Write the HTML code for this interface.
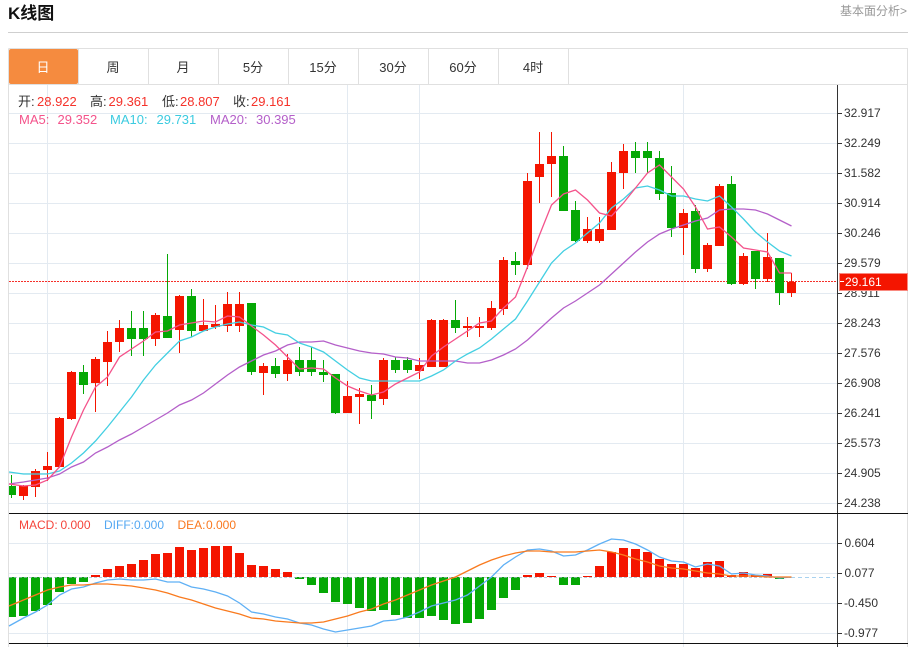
<!DOCTYPE html>
<html lang="zh">
<head>
<meta charset="utf-8">
<title>K线图</title>
<style>
html,body{margin:0;padding:0;background:#fff;width:914px;height:647px;overflow:hidden}
svg{position:absolute;left:0;top:0;display:block}
text{font-family:"Liberation Sans","Noto Sans CJK SC",sans-serif}
.ax text{font-size:12px;fill:#333}
.tab text{font-size:13px;fill:#333;text-anchor:middle}
</style>
</head>
<body>
<svg width="914" height="647" viewBox="0 0 914 647" xmlns="http://www.w3.org/2000/svg">
<text x="8" y="19" font-size="17" font-weight="700" fill="#111">K线图</text>
<text x="840" y="15" font-size="12" fill="#999">基本面分析&gt;</text>
<path d="M8 32.5H908" stroke="#cfcfcf" fill="none"/>

<!-- frame and tabs -->
<path d="M8.5 48.5H907.5V647M8.5 48.5V647M8 84.5H908" stroke="#e0e0e0" fill="none"/>
<path d="M78.5 48V84M148.5 48V84M218.5 48V84M288.5 48V84M358.5 48V84M428.5 48V84M498.5 48V84M568.5 48V84" stroke="#e0e0e0" fill="none"/>
<rect x="9" y="49" width="69" height="35" rx="2" fill="#f58b3f"/>
<g class="tab">
<text x="43" y="72" style="fill:#fff">日</text>
<text x="113" y="72">周</text>
<text x="183" y="72">月</text>
<text x="253" y="72">5分</text>
<text x="323" y="72">15分</text>
<text x="393" y="72">30分</text>
<text x="463" y="72">60分</text>
<text x="533" y="72">4时</text>
</g>

<!-- grid -->
<path d="M9 113.5H837M9 143.5H837M9 173.5H837M9 203.5H837M9 233.5H837M9 263.5H837M9 293.5H837M9 323.5H837M9 353.5H837M9 383.5H837M9 413.5H837M9 443.5H837M9 473.5H837M9 503.5H837M9 543.5H837M9 573.5H837M9 603.5H837M9 633.5H837M47.5 85V647M347.5 85V647M419.5 85V647M683.5 85V647" stroke="#e3eaf1" fill="none"/>

<!-- price line -->
<path d="M9 281.5H837" stroke="#f5302a" stroke-dasharray="2 1" fill="none"/>

<!-- red candles -->
<path stroke="#f41500" fill="none" d="M23.5 485V500M35.5 469V497M47.5 452V481M59.5 417V467M71.5 371V420M95.5 357V412M107.5 331V386M119.5 320V352M155.5 313V346M179.5 295V353M203.5 299V331M215.5 305V329M227.5 292V332M239.5 292V332M263.5 363V395M287.5 354V381M347.5 381V413M359.5 388V424M383.5 358V405M419.5 358V379M431.5 319V367M443.5 319V367M467.5 317V337M479.5 317V337M491.5 301V330M503.5 257V315M527.5 173V269M539.5 132V203M551.5 132V197M587.5 217V243M599.5 217V243M611.5 162V230M623.5 144V189M683.5 209V255M707.5 243V272M719.5 184V246M743.5 253V285M767.5 233V282M791.5 273V297"/>
<path fill="#f41500" d="M19 486h9V496h-9zM31 471h9V487h-9zM43 466h9V470h-9zM55 418h9V467h-9zM67 372h9V419h-9zM91 359h9V383h-9zM103 342h9V362h-9zM115 328h9V342h-9zM151 315h9V339h-9zM175 296h9V330h-9zM199 325h9V331h-9zM211 324h9V327h-9zM223 304h9V326h-9zM235 304h9V326h-9zM259 366h9V373h-9zM283 360h9V374h-9zM343 396h9V413h-9zM355 394h9V397h-9zM379 360h9V399h-9zM415 365h9V371h-9zM427 320h9V367h-9zM439 320h9V367h-9zM463 326h9V328h-9zM475 326h9V328h-9zM487 308h9V328h-9zM499 260h9V309h-9zM523 181h9V265h-9zM535 164h9V177h-9zM547 156h9V164h-9zM583 229h9V241h-9zM595 229h9V241h-9zM607 172h9V230h-9zM619 151h9V173h-9zM679 213h9V228h-9zM703 245h9V269h-9zM715 186h9V246h-9zM739 256h9V284h-9zM763 257h9V279h-9zM787 282h9V293h-9z"/>

<!-- green candles -->
<path stroke="#05a805" fill="none" d="M11.5 475V498M83.5 365V394M131.5 311V356M143.5 311V356M167.5 254V338M191.5 289V337M251.5 303V375M275.5 358V378M299.5 347V376M311.5 347V376M323.5 360V382M335.5 374V414M371.5 385V419M395.5 357V373M407.5 357V373M455.5 300V333M515.5 252V275M563.5 146V211M575.5 201V242M635.5 142V173M647.5 142V173M659.5 151V200M671.5 166V237M695.5 205V273M731.5 176V285M755.5 251V289M779.5 258V305"/>
<path fill="#05a805" d="M9 486h7V495h-7zM79 372h9V385h-9zM127 328h9V339h-9zM139 328h9V339h-9zM163 316h9V338h-9zM187 296h9V331h-9zM247 303h9V372h-9zM271 366h9V374h-9zM295 360h9V372h-9zM307 360h9V372h-9zM319 372h9V375h-9zM331 374h9V413h-9zM367 395h9V401h-9zM391 360h9V370h-9zM403 360h9V370h-9zM451 320h9V328h-9zM511 261h9V265h-9zM559 156h9V211h-9zM571 210h9V241h-9zM631 151h9V158h-9zM643 151h9V158h-9zM655 158h9V194h-9zM667 193h9V228h-9zM691 211h9V269h-9zM727 184h9V284h-9zM751 251h9V279h-9zM775 258h9V293h-9z"/>

<!-- MA lines -->
<polyline fill="none" stroke="#b45fc9" stroke-width="1.3" points="9,484 23.5,482 35.5,480 47.5,478 59.5,474 71.5,467 83.5,462 95.5,453 107.5,447 119.5,440 131.5,434 143.5,427 155.5,420 167.5,413 179.5,405 191.5,400 203.5,393 215.5,384 227.5,375 239.5,367 251.5,361 263.5,355 275.5,351 287.5,345 299.5,342 311.5,342 323.5,341 335.5,345 347.5,348 359.5,351 371.5,353 383.5,354 395.5,357 407.5,358 419.5,361 431.5,361 443.5,361 455.5,361 467.5,363 479.5,363 491.5,360 503.5,355 515.5,349 527.5,340 539.5,329 551.5,318 563.5,308 575.5,301 587.5,293 599.5,285 611.5,274 623.5,263 635.5,252 647.5,242 659.5,234 671.5,229 683.5,225 695.5,221 707.5,218 719.5,210 731.5,209 743.5,209 755.5,210 767.5,214 779.5,220 791.5,226"/>
<polyline fill="none" stroke="#43cfe2" stroke-width="1.3" points="9,472 23.5,474 35.5,474 47.5,474 59.5,471 71.5,463 83.5,453 95.5,441 107.5,427 119.5,412 131.5,397 143.5,380 155.5,365 167.5,353 179.5,341 191.5,337 203.5,331 215.5,327 227.5,324 239.5,322 251.5,325 263.5,327 275.5,333 287.5,335 299.5,343 311.5,347 323.5,352 335.5,361 347.5,370 359.5,378 371.5,381 383.5,381 395.5,381 407.5,381 419.5,381 431.5,376 443.5,370 455.5,361 467.5,354 479.5,348 491.5,339 503.5,329 515.5,319 527.5,301 539.5,282 551.5,263 563.5,251 575.5,243 587.5,233 599.5,223 611.5,208 623.5,199 635.5,188 647.5,186 659.5,190 671.5,196 683.5,196 695.5,199 707.5,201 719.5,196 731.5,207 743.5,219 755.5,232 767.5,242 779.5,251 791.5,256"/>
<polyline fill="none" stroke="#f4538b" stroke-width="1.3" points="9,484 23.5,486 35.5,485 47.5,480 59.5,467 71.5,437 83.5,410 95.5,387 107.5,377 119.5,357 131.5,349 143.5,341 155.5,332 167.5,331 179.5,325 191.5,323 203.5,321 215.5,322 227.5,316 239.5,317 251.5,326 263.5,335 275.5,345 287.5,357 299.5,369 311.5,368 323.5,369 335.5,378 347.5,386 359.5,391 371.5,395 383.5,392 395.5,384 407.5,378 419.5,372 431.5,356 443.5,347 455.5,339 467.5,331 479.5,323 491.5,321 503.5,308 515.5,297 527.5,267 539.5,235 551.5,205 563.5,194 575.5,190 587.5,200 599.5,213 611.5,216 623.5,203 635.5,188 647.5,173 659.5,165 671.5,177 683.5,189 695.5,207 707.5,229 719.5,227 731.5,237 743.5,248 755.5,250 767.5,252 779.5,273 791.5,273"/>

<!-- axis -->
<path d="M837.5 85V647M837 113.5H842M837 143.5H842M837 173.5H842M837 203.5H842M837 233.5H842M837 263.5H842M837 293.5H842M837 323.5H842M837 353.5H842M837 383.5H842M837 413.5H842M837 443.5H842M837 473.5H842M837 503.5H842M837 543.5H842M837 573.5H842M837 603.5H842M837 633.5H842" stroke="#333" fill="none"/>
<g class="ax">
<text x="844" y="117">32.917</text>
<text x="844" y="147">32.249</text>
<text x="844" y="177">31.582</text>
<text x="844" y="207">30.914</text>
<text x="844" y="237">30.246</text>
<text x="844" y="267">29.579</text>
<text x="844" y="297">28.911</text>
<text x="844" y="327">28.243</text>
<text x="844" y="357">27.576</text>
<text x="844" y="387">26.908</text>
<text x="844" y="417">26.241</text>
<text x="844" y="447">25.573</text>
<text x="844" y="477">24.905</text>
<text x="844" y="507">24.238</text>
<text x="844.5" y="547">0.604</text>
<text x="844.5" y="577">0.077</text>
<text x="844" y="607">-0.450</text>
<text x="844" y="637">-0.977</text>
</g>
<rect x="839.5" y="273.5" width="68" height="17" fill="#f41500" stroke="#f98a80"/>
<path d="M840 281.5H844" stroke="#fff" fill="none"/>
<text x="845" y="286" font-size="12" fill="#fff">29.161</text>

<!-- legend -->
<g font-size="13">
<text x="18" y="106" fill="#333">开:</text><text x="37" y="106" fill="#f5322a">28.922</text>
<text x="90" y="106" fill="#333">高:</text><text x="108.5" y="106" fill="#f5322a">29.361</text>
<text x="162" y="106" fill="#333">低:</text><text x="180" y="106" fill="#f5322a">28.807</text>
<text x="233" y="106" fill="#333">收:</text><text x="251" y="106" fill="#f5322a">29.161</text>
<text x="19" y="124" fill="#f4538b">MA5:</text><text x="57.5" y="124" fill="#f4538b">29.352</text>
<text x="110" y="124" fill="#3ccbe0">MA10:</text><text x="156.5" y="124" fill="#3ccbe0">29.731</text>
<text x="210" y="124" fill="#b45fc9">MA20:</text><text x="256" y="124" fill="#b45fc9">30.395</text>
</g>

<!-- MACD frame -->
<path d="M9 513.5H908M9 643.5H908" stroke="#111" fill="none"/>
<g font-size="12">
<text x="19" y="529" fill="#f5443a">MACD:</text><text x="60.5" y="529" fill="#f5443a">0.000</text>
<text x="104" y="529" fill="#54a8f2">DIFF:</text><text x="134" y="529" fill="#54a8f2">0.000</text>
<text x="177.5" y="529" fill="#f9781e">DEA:</text><text x="206" y="529" fill="#f9781e">0.000</text>
</g>

<!-- histogram -->
<path fill="#f41500" d="M91 575h9V577h-9zM103 569h9V577h-9zM115 566h9V577h-9zM127 564h9V577h-9zM139 560h9V577h-9zM151 554h9V577h-9zM163 553h9V577h-9zM175 547h9V577h-9zM187 550h9V577h-9zM199 548h9V577h-9zM211 546h9V577h-9zM223 546h9V577h-9zM235 553h9V577h-9zM247 565h9V577h-9zM259 566h9V577h-9zM271 569h9V577h-9zM283 572h9V577h-9zM523 575h9V577h-9zM535 573h9V577h-9zM547 576h9V577h-9zM583 576h9V577h-9zM595 566h9V577h-9zM607 552h9V577h-9zM619 548h9V577h-9zM631 549h9V577h-9zM643 552h9V577h-9zM655 559h9V577h-9zM667 564h9V577h-9zM679 564h9V577h-9zM691 568h9V577h-9zM703 562h9V577h-9zM715 561h9V577h-9zM727 575h9V577h-9zM739 572h9V577h-9zM751 575h9V577h-9zM763 574h9V577h-9z"/>
<path fill="#05a805" d="M9 577h7V617h-7zM19 577h9V616h-9zM31 577h9V611h-9zM43 577h9V605h-9zM55 577h9V592h-9zM67 577h9V584h-9zM79 577h9V582h-9zM295 577h9V579h-9zM307 577h9V585h-9zM319 577h9V593h-9zM331 577h9V602h-9zM343 577h9V604h-9zM355 577h9V608h-9zM367 577h9V611h-9zM379 577h9V610h-9zM391 577h9V615h-9zM403 577h9V618h-9zM415 577h9V618h-9zM427 577h9V616h-9zM439 577h9V620h-9zM451 577h9V624h-9zM463 577h9V623h-9zM475 577h9V619h-9zM487 577h9V610h-9zM499 577h9V598h-9zM511 577h9V590h-9zM559 577h9V585h-9zM571 577h9V585h-9zM775 577h9V579h-9z"/>
<path d="M9 577.5H791" stroke="#9fb3c4" stroke-dasharray="3 2" stroke-opacity=".7" fill="none"/>
<path d="M791 577.5H835" stroke="#a8d2f0" stroke-dasharray="4 3" fill="none"/>

<!-- DIFF / DEA -->
<polyline fill="none" stroke="#5fb0f5" stroke-width="1.3" points="9,626 23.5,618 35.5,612 47.5,605 59.5,595 71.5,589 83.5,587 95.5,583 107.5,580 119.5,579 131.5,580 143.5,580 155.5,579 167.5,582 179.5,582 191.5,587 203.5,589 215.5,592 227.5,596 239.5,603 251.5,612 263.5,614 275.5,617 287.5,619 299.5,623 311.5,625 323.5,629 335.5,632 347.5,630 359.5,628 371.5,626 383.5,621 395.5,620 407.5,617 419.5,612 431.5,606 443.5,603 455.5,600 467.5,595 479.5,586 491.5,577 503.5,565 515.5,557 527.5,550 539.5,549 551.5,551 563.5,556 575.5,555 587.5,550 599.5,544 611.5,539 623.5,540 635.5,544 647.5,550 659.5,557 671.5,561 683.5,562 695.5,567 707.5,564 719.5,566 731.5,574 743.5,573 755.5,575 767.5,576 779.5,578 791.5,577"/>
<polyline fill="none" stroke="#f97a1e" stroke-width="1.3" points="9,606 23.5,600 35.5,595 47.5,590 59.5,587 71.5,585 83.5,585 95.5,584 107.5,584 119.5,585 131.5,586 143.5,588 155.5,590 167.5,593 179.5,597 191.5,600 203.5,604 215.5,608 227.5,611 239.5,614 251.5,618 263.5,619 275.5,621 287.5,622 299.5,623 311.5,623 323.5,622 335.5,619 347.5,616 359.5,612 371.5,609 383.5,604 395.5,600 407.5,595 419.5,590 431.5,585 443.5,581 455.5,577 467.5,571 479.5,565 491.5,560 503.5,556 515.5,553 527.5,551 539.5,551 551.5,552 563.5,552 575.5,552 587.5,551 599.5,550 611.5,552 623.5,555 635.5,559 647.5,562 659.5,566 671.5,568 683.5,569 695.5,571 707.5,573 719.5,574 731.5,576 743.5,576 755.5,576 767.5,577 779.5,577 791.5,577"/>
</svg>
</body>
</html>
